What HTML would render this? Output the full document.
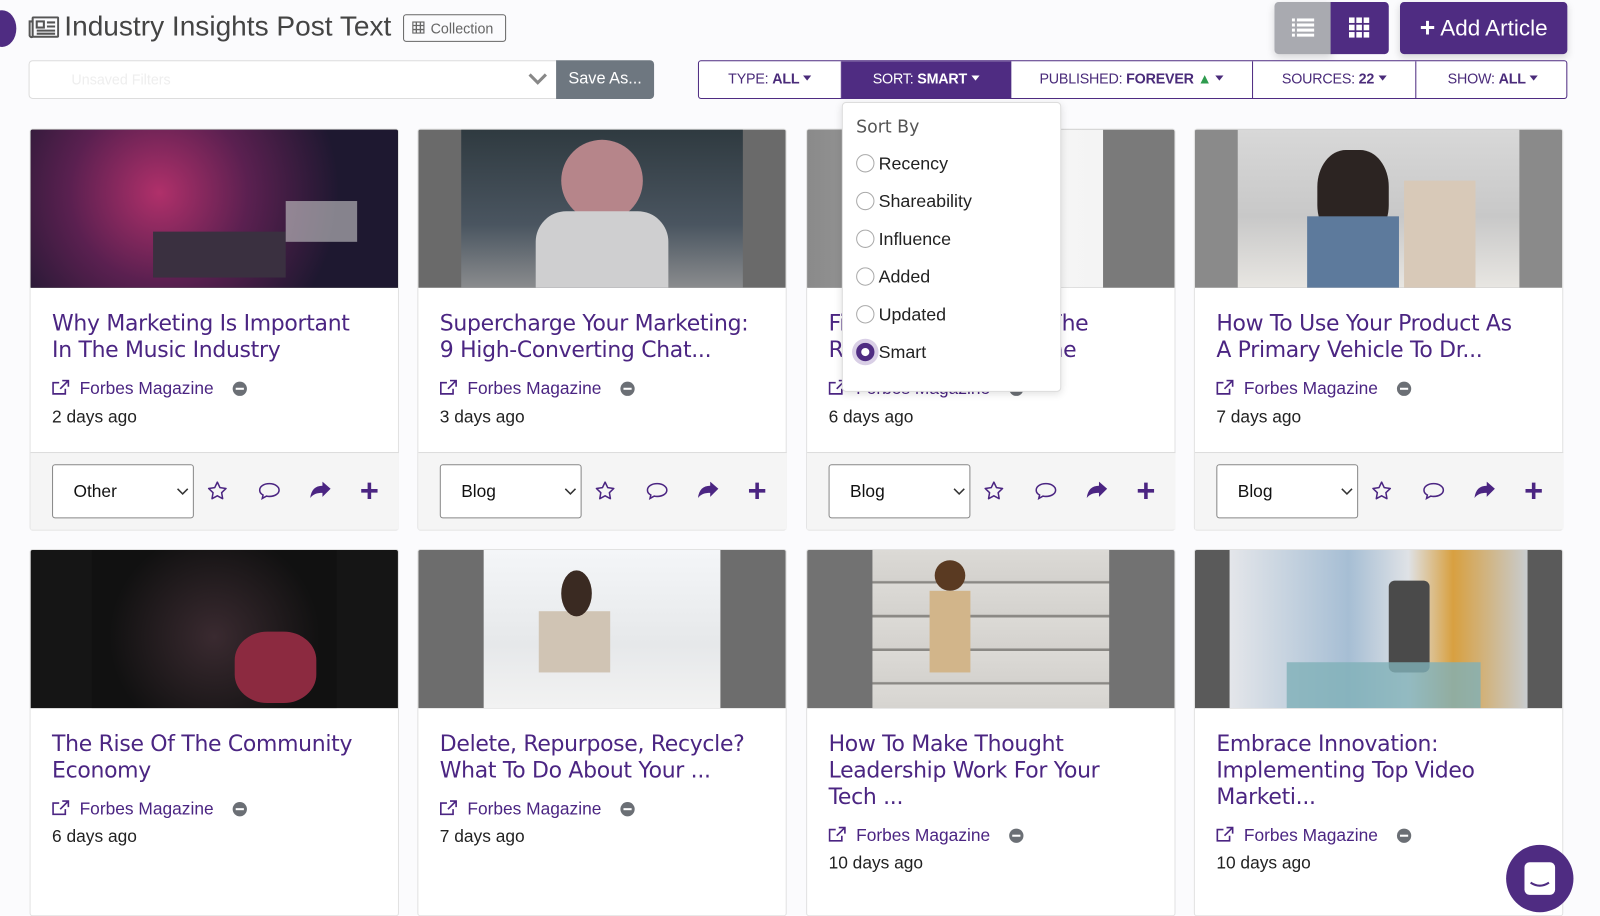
<!DOCTYPE html>
<html><head><meta charset="utf-8">
<style>
*{box-sizing:border-box;margin:0;padding:0}
html,body{width:1600px;height:896px;overflow:hidden;background:#fbfbfd;font-family:"Liberation Sans",sans-serif}
#w{position:absolute;left:0;top:0;width:1568px;height:878px;transform:scale(1.0204);transform-origin:0 0}
.a{position:absolute}
.card{position:absolute;width:362px;background:#fff;border:1px solid #e2e2e2;border-radius:3px;overflow:hidden}
.img{height:155px;position:relative;overflow:hidden}
.img .c{position:absolute;top:0;bottom:0;left:42px;right:42px}
.ttl{position:absolute;left:21px;top:178px;width:310px;font-family:"DejaVu Sans",sans-serif;font-size:21.5px;line-height:26px;color:#4b2582;letter-spacing:-0.3px}
.src{position:absolute;left:21px;font-size:17px;color:#4b2582}
.src svg{vertical-align:-2px;margin-right:9px}
.min{display:inline-block;width:14px;height:14px;border-radius:50%;background:#6b6f75;margin-left:19px;vertical-align:-2px;position:relative}
.min:after{content:"";position:absolute;left:3px;right:3px;top:6px;height:2px;background:#fff}
.date{position:absolute;left:21px;font-size:17px;color:#222}
.sel{position:absolute;left:21px;top:12px;width:139px;height:53px;border:1px solid #888;border-radius:3px;background:#fff;font-size:17px;padding:16px 0 0 20px;color:#111}
.sel svg{position:absolute;right:4px;top:22px}
.seg{position:absolute;top:0;height:37px;border-right:1px solid #4f2c82;font-size:14px;color:#4a2b7a;text-align:center;line-height:34px;letter-spacing:-0.2px}
.seg b{font-weight:bold}
.car{display:inline-block;border-left:4px solid transparent;border-right:4px solid transparent;border-top:5px solid currentColor;vertical-align:3px;margin-left:4px}
.opt{position:absolute;left:13px;font-size:17.5px;color:#222}
.opt i{display:inline-block;width:18px;height:18px;border:1.5px solid #aaa;border-radius:50%;vertical-align:-3px;margin-right:4px}
</style></head><body><div id="w">

<div class="a" style="left:-12px;top:10px;width:28px;height:36px;border-radius:50%;background:#4f2c82"></div>
<svg class="a" style="left:28px;top:16px" width="30" height="22" viewBox="0 0 30 22" fill="none" stroke="#555" stroke-width="2"><rect x="4" y="1" width="25" height="19" rx="1"/><path d="M4 5H1v14a2 2 0 0 0 3 1"/><rect x="8" y="5" width="7" height="6"/><path d="M18 6h8M18 10h8M8 14h18M8 17h18"/></svg>
<div class="a" style="left:63px;top:10px;font-size:27.5px;color:#444">Industry Insights Post Text</div>
<div class="a" style="left:395px;top:14px;width:101px;height:27px;border:1px solid #666;border-radius:3px;font-size:14px;color:#666;padding:5px 0 0 26px">Collection</div>
<svg class="a" style="left:404px;top:21px" width="12" height="12" viewBox="0 0 12 12" fill="none" stroke="#666" stroke-width="1.3"><rect x=".5" y=".5" width="11" height="11"/><path d="M4 .5v11M8 .5v11M.5 4h11M.5 8h11"/></svg>

<div class="a" style="left:28px;top:59px;width:518px;height:38px;background:#fff;border:1px solid #ddd;border-radius:4px 0 0 4px"></div>
<div class="a" style="left:70px;top:70px;font-size:14px;color:#eee">Unsaved Filters</div>
<svg class="a" style="left:517px;top:70px" width="20" height="14" viewBox="0 0 20 14"><path d="M2 3l8 8 8-8" fill="none" stroke="#888" stroke-width="3"/></svg>
<div class="a" style="left:545px;top:59px;width:96px;height:38px;background:#6e7780;border-radius:0 4px 4px 0;color:#fff;font-size:16px;line-height:38px;text-align:center">Save As...</div>

<div class="a" style="left:1249px;top:2px;width:56px;height:51px;background:#a9aab0;border-radius:4px 0 0 4px;box-shadow:0 3px 8px rgba(0,0,0,.15)"></div>
<svg class="a" style="left:1266px;top:18px" width="22" height="18" viewBox="0 0 22 18" fill="#fff"><rect x="0" y="0" width="3" height="3"/><rect x="5" y="0" width="17" height="3"/><rect x="0" y="5" width="3" height="3"/><rect x="5" y="5" width="17" height="3"/><rect x="0" y="10" width="3" height="3"/><rect x="5" y="10" width="17" height="3"/><rect x="0" y="15" width="3" height="3"/><rect x="5" y="15" width="17" height="3"/></svg>
<div class="a" style="left:1304px;top:2px;width:57px;height:51px;background:#4f2c82;border-radius:0 4px 4px 0"></div>
<svg class="a" style="left:1322px;top:17px" width="20" height="20" viewBox="0 0 20 20" fill="#fff"><rect x="0" y="0" width="5.5" height="5.5"/><rect x="7.2" y="0" width="5.5" height="5.5"/><rect x="14.4" y="0" width="5.5" height="5.5"/><rect x="0" y="7.2" width="5.5" height="5.5"/><rect x="7.2" y="7.2" width="5.5" height="5.5"/><rect x="14.4" y="7.2" width="5.5" height="5.5"/><rect x="0" y="14.4" width="5.5" height="5.5"/><rect x="7.2" y="14.4" width="5.5" height="5.5"/><rect x="14.4" y="14.4" width="5.5" height="5.5"/></svg>
<div class="a" style="left:1372px;top:2px;width:164px;height:51px;background:#4f2c82;border-radius:4px;color:#fff;font-size:22px;line-height:51px;text-align:center;box-shadow:0 3px 8px rgba(0,0,0,.15)"><span style="font-weight:bold;font-size:26px;vertical-align:-1px">+</span> Add Article</div>

<div class="a" style="left:684px;top:59px;width:852px;height:38px;border:1px solid #4f2c82;border-radius:3px;background:#fff;overflow:hidden">
<div class="seg" style="left:0;width:140px">TYPE: <b>ALL</b><span class="car"></span></div>
<div class="seg" style="left:140px;width:166px;background:#4f2c82;color:#fff">SORT: <b>SMART</b><span class="car"></span></div>
<div class="seg" style="left:306px;width:237px">PUBLISHED: <b>FOREVER</b> <span style="color:#2e9b4e">&#9650;</span><span class="car"></span></div>
<div class="seg" style="left:543px;width:160px">SOURCES: <b>22</b><span class="car"></span></div>
<div class="seg" style="left:703px;width:150px;border:none">SHOW: <b>ALL</b><span class="car"></span></div>
</div>

<div class="card" style="left:29px;top:126px;height:394px">
 <div class="img" style="background:linear-gradient(90deg,#2a2a32,#1b1b24)"><div class="c" style="left:0;right:0;background:radial-gradient(circle at 35% 40%,#b0306a 0,#5a2050 35%,#1e1830 70%),#222"></div><div class="a" style="left:120px;top:100px;width:130px;height:45px;background:#3a3040"></div><div class="a" style="left:250px;top:70px;width:70px;height:40px;background:#ccc;opacity:.6"></div></div>
 <div class="ttl">Why Marketing Is Important In The Music Industry</div>
</div>
<div class="card" style="left:409px;top:126px;height:394px">
 <div class="img" style="background:#6a6a6a"><div class="c" style="background:linear-gradient(180deg,#2f3a40,#4a5560 60%,#8a8c8e)"></div><div class="a" style="left:140px;top:10px;width:80px;height:80px;border-radius:50%;background:#b6858a"></div><div class="a" style="left:115px;top:80px;width:130px;height:75px;background:#cfcfd0;border-radius:30px 30px 0 0"></div></div>
 <div class="ttl">Supercharge Your Marketing: 9 High-Converting Chat...</div>
</div>
<div class="card" style="left:790px;top:126px;height:394px">
 <div class="img" style="background:#7a7a7a"><div class="c" style="left:0;right:70px;background:linear-gradient(90deg,#8a8a8a 0,#9a9a9a 80px,#fafafa 82px,#f4f4f4)"></div></div>
 <div class="ttl">Five Ways To Revive The Radio In Your Magazine</div>
</div>
<div class="card" style="left:1170px;top:126px;height:394px">
 <div class="img" style="background:#8a8a8a"><div class="c" style="background:linear-gradient(180deg,#d8d8d8,#c8c8c8 55%,#e8e6e2)"></div><div class="a" style="left:120px;top:20px;width:70px;height:90px;border-radius:40%;background:#2c2422"></div><div class="a" style="left:110px;top:85px;width:90px;height:70px;background:#5d7a9c"></div><div class="a" style="left:205px;top:50px;width:70px;height:105px;background:#d8c9b8"></div></div>
 <div class="ttl">How To Use Your Product As A Primary Vehicle To Dr...</div>
</div>

<div class="card" style="left:29px;top:538px;height:360px">
 <div class="img" style="background:#151515"><div class="c" style="left:60px;right:60px;background:radial-gradient(circle at 50% 55%,#3a2a30,#111 70%)"></div><div class="a" style="left:200px;top:80px;width:80px;height:70px;background:#8c2a40;border-radius:40%"></div></div>
 <div class="ttl">The Rise Of The Community Economy</div>
</div>
<div class="card" style="left:409px;top:538px;height:360px">
 <div class="img" style="background:#6d6d6d"><div class="c" style="left:64px;right:64px;background:linear-gradient(180deg,#f4f6f8,#e6e8ea 60%,#f2f2f2)"></div><div class="a" style="left:118px;top:60px;width:70px;height:60px;background:#d0c4b4"></div><div class="a" style="left:140px;top:20px;width:30px;height:45px;border-radius:50%;background:#3a2a22"></div></div>
 <div class="ttl">Delete, Repurpose, Recycle? What To Do About Your ...</div>
</div>
<div class="card" style="left:790px;top:538px;height:360px">
 <div class="img" style="background:#727272"><div class="c" style="left:64px;right:64px;background:repeating-linear-gradient(180deg,#dcdad6 0,#d4d2ce 30px,#8a8884 31px,#8a8884 33px)"></div><div class="a" style="left:120px;top:40px;width:40px;height:80px;background:#d2b58a"></div><div class="a" style="left:125px;top:10px;width:30px;height:30px;border-radius:50%;background:#5a3a22"></div></div>
 <div class="ttl">How To Make Thought Leadership Work For Your Tech ...</div>
</div>
<div class="card" style="left:1170px;top:538px;height:360px">
 <div class="img" style="background:#5a5a5a"><div class="c" style="left:34px;right:34px;background:linear-gradient(90deg,#e4e6ea,#a6bed4 40%,#dfe2e6 60%,#d8a040 75%,#c8ccd0)"></div><div class="a" style="left:190px;top:30px;width:40px;height:90px;background:#4a4a4a;border-radius:6px"></div><div class="a" style="left:90px;top:110px;width:190px;height:45px;background:#7fb0b8;opacity:.8"></div></div>
 <div class="ttl">Embrace Innovation: Implementing Top Video Marketi...</div>
</div>

<div id="txt"></div>

<div class="a" style="left:825px;top:100px;width:215px;height:284px;background:#fff;border:1px solid #ddd;border-radius:4px;box-shadow:0 2px 8px rgba(0,0,0,.12)">
 <div class="a" style="left:13px;top:14px;color:#555;font-family:'DejaVu Sans',sans-serif;font-size:17px">Sort By</div>
 <div class="opt" style="top:49px"><i></i>Recency</div>
 <div class="opt" style="top:86px"><i></i>Shareability</div>
 <div class="opt" style="top:123px"><i></i>Influence</div>
 <div class="opt" style="top:160px"><i></i>Added</div>
 <div class="opt" style="top:197px"><i></i>Updated</div>
 <div class="opt" style="top:234px"><i style="border:5px solid #4f2c82;box-shadow:0 0 0 4px #d9cfe6"></i>Smart</div>
</div>

<div class="a" style="left:1476px;top:828px;width:66px;height:66px;border-radius:50%;background:#4f2c82"></div>
<div class="a" style="left:1494px;top:845px;width:30px;height:32px;background:#fff;border-radius:5px"></div>
<svg class="a" style="left:1494px;top:845px" width="30" height="32"><path d="M6 20q9 6 18 0" fill="none" stroke="#4f2c82" stroke-width="2"/></svg>

<script>
var cols=[29,409,790,1170];
var h='';
var r2=[{src:794,date:821},{src:794,date:821},{src:820,date:847},{src:820,date:847}];
var dates1=['2 days ago','3 days ago','6 days ago','7 days ago'];
var dates2=['6 days ago','7 days ago','10 days ago','10 days ago'];
var sels=['Other','Blog','Blog','Blog'];
var ext='<svg width="18" height="16" viewBox="0 0 18 16" fill="none" stroke="#4b2582" stroke-width="1.6"><path d="M13 9v5H1V3h6M10 1h6v6M16 1L8 9"/></svg>';
function src(x,y){return '<div class="a src" style="left:'+(x+22)+'px;top:'+(y-11)+'px">'+ext+'Forbes Magazine<span class="min"></span></div>';}
function dt(x,y,t){return '<div class="a date" style="left:'+(x+22)+'px;top:'+(y-11)+'px">'+t+'</div>';}
for(var i=0;i<4;i++){var x=cols[i];
 h+=src(x,382)+dt(x,410,dates1[i]);
 h+=src(x,r2[i].src)+dt(x,r2[i].date,dates2[i]);
 h+='<div class="a" style="left:'+(x+1)+'px;top:443px;width:361px;height:76px;background:#f5f5f5;border-top:1px solid #dcdcdc"></div>';
 h+='<div class="a sel" style="left:'+(x+22)+'px;top:455px">'+sels[i]+'<svg width="12" height="8" viewBox="0 0 12 8"><path d="M1 1l5 5 5-5" fill="none" stroke="#333" stroke-width="1.5"/></svg></div>';
 h+='<svg class="a" style="left:'+(x+174)+'px;top:471px" width="20" height="19" viewBox="0 0 20 19"><path d="M10 1.5l2.6 5.4 5.9.8-4.3 4.1 1 5.9L10 14.9l-5.2 2.8 1-5.9L1.5 7.7l5.9-.8z" fill="none" stroke="#4b2582" stroke-width="1.5" stroke-linejoin="round"/></svg>';
 h+='<svg class="a" style="left:'+(x+224)+'px;top:472px" width="22" height="18" viewBox="0 0 22 18"><path d="M11 2C5.5 2 1.5 4.8 1.5 8.3c0 2 1.3 3.7 3.3 4.8L4 16.5l4.2-2.3c.9.2 1.8.3 2.8.3 5.5 0 9.5-2.8 9.5-6.2S16.5 2 11 2z" fill="none" stroke="#4b2582" stroke-width="1.5"/></svg>';
 h+='<svg class="a" style="left:'+(x+274)+'px;top:472px" width="22" height="18" viewBox="0 0 22 18"><path d="M21 7L13 0v4C6 4 2 8 1 16c3-4 7-5 12-5v4z" fill="#4b2582"/></svg>';
 h+='<svg class="a" style="left:'+(x+324)+'px;top:472px" width="18" height="18" viewBox="0 0 18 18"><path d="M9 1v16M1 9h16" stroke="#4b2582" stroke-width="3.5"/></svg>';
}
document.getElementById('txt').innerHTML=h;
</script>
</div></body></html>
